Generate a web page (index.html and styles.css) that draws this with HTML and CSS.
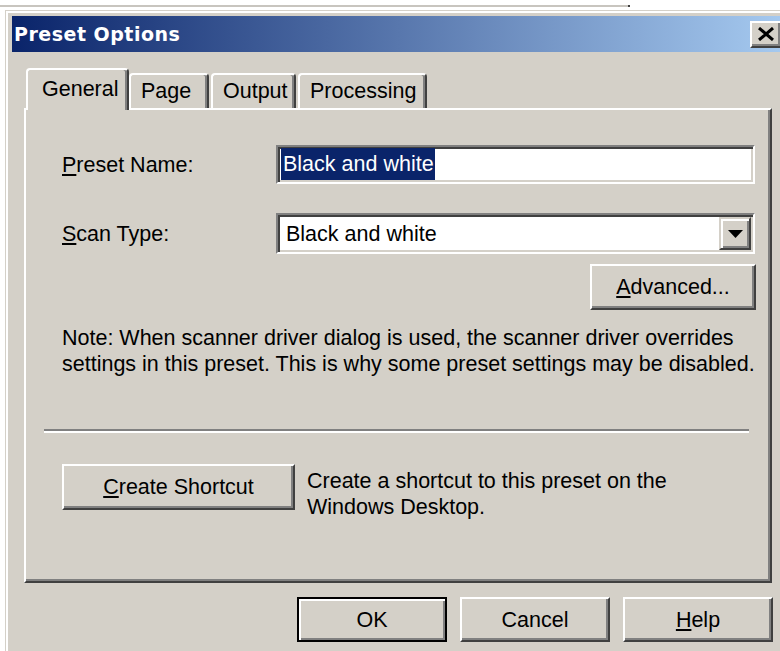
FILE: index.html
```html
<!DOCTYPE html>
<html lang="en">
<head>
<meta charset="utf-8">
<title>Preset Options</title>
<link rel="stylesheet" href="styles.css">
</head>
<body>
<div class="backdrop">
  <div class="backdrop-edge"></div>
</div>
<div class="dialog">
  <div class="titlebar">
    <span class="titlebar-text">Preset Options</span>
    <button class="titlebar-close" type="button" aria-label="Close">
      <svg width="18" height="14" viewBox="0 0 18 14"><path d="M2 1 L16 13 M16 1 L2 13" stroke="#000" stroke-width="3" fill="none"/></svg>
    </button>
  </div>
  <div class="dialog-body">
    <div class="tabs">
      <div class="tab tab-active tab-general">General</div>
      <div class="tab tab-page">Page</div>
      <div class="tab tab-output">Output</div>
      <div class="tab tab-processing">Processing</div>
    </div>
    <div class="tab-panel">
      <div class="field">
        <label class="field-label"><u>P</u>reset Name:</label>
        <div class="edit"><span class="edit-selection">Black and white</span></div>
      </div>
      <div class="field field-combo">
        <label class="field-label"><u>S</u>can Type:</label>
        <div class="combo">
          <span class="combo-value">Black and white</span>
          <span class="combo-button">
            <svg width="15" height="8" viewBox="0 0 15 8"><polygon points="0,0 15,0 7.5,8" fill="#000"/></svg>
          </span>
        </div>
      </div>
      <div class="advanced-row">
        <button class="btn btn-advanced" type="button"><u>A</u>dvanced...</button>
      </div>
      <p class="note">Note: When scanner driver dialog is used, the scanner driver overrides<br>settings in this preset. This is why some preset settings may be disabled.</p>
      <div class="separator"></div>
      <div class="shortcut-row">
        <button class="btn btn-shortcut" type="button"><u>C</u>reate Shortcut</button>
        <p class="shortcut-text">Create a shortcut to this preset on the<br>Windows Desktop.</p>
      </div>
    </div>
    <div class="actions">
      <button class="btn btn-action btn-default" type="button">OK</button>
      <button class="btn btn-action" type="button">Cancel</button>
      <button class="btn btn-action" type="button"><u>H</u>elp</button>
    </div>
  </div>
</div>
</body>
</html>
```

FILE: styles.css
```css
html, body {
  margin: 0;
  padding: 0;
}

body {
  width: 780px;
  height: 651px;
  overflow: hidden;
  background: #fff;
  color: #000;
  font-family: "Liberation Sans", Arial, sans-serif;
  font-size: 21.5px;
  line-height: 26px;
}

u {
  text-decoration-thickness: 2px;
  text-underline-offset: 2px;
}

/* window behind the dialog */
.backdrop {
  box-sizing: border-box;
  height: 10px;
  padding-top: 5px;
}

.backdrop-edge {
  width: 628px;
  height: 2px;
  background: #c8c5bf;
  border-right: 2px solid #404040;
}

/* dialog frame */
.dialog {
  box-sizing: border-box;
  width: 800px;
  height: 641px;
  margin-left: 5px;
  padding: 5px 0 0 6px;
  background: #d4d0c8;
  border-top: 1px solid #d4d0c8;
  border-left: 1px solid #d4d0c8;
  box-shadow: inset 2px 2px #fff;
}

.titlebar {
  box-sizing: border-box;
  display: flex;
  align-items: center;
  justify-content: space-between;
  width: 774px;
  height: 36px;
  padding: 0 4px 0 2px;
  background: linear-gradient(to right, #0a246a, #a6caf0);
}

.titlebar-text {
  font-family: "DejaVu Sans", sans-serif;
  font-weight: bold;
  font-size: 19px;
  line-height: 1;
  letter-spacing: 0.5px;
  color: #fff;
}

.titlebar-close {
  box-sizing: border-box;
  display: flex;
  align-items: center;
  justify-content: center;
  width: 32px;
  height: 27px;
  padding: 0;
  background: #d4d0c8;
  border: 2px solid;
  border-color: #fff #404040 #404040 #fff;
  box-shadow: inset -2px -2px #808080;
}

.dialog-body {
  padding: 16px 0 0 12px;
}

/* tab strip */
.tabs {
  display: flex;
  align-items: flex-end;
  height: 40px;
  padding-left: 2px;
}

.tab {
  box-sizing: border-box;
  height: 35px;
  padding: 3px 0 0 10px;
  background: #d4d0c8;
  border-top: 2px solid #fff;
  border-left: 2px solid #fff;
  border-right: 2px solid #404040;
  border-radius: 4px 4px 0 0;
  box-shadow: inset -2px 0 #808080;
  white-space: nowrap;
}

.tab-active {
  position: relative;
  z-index: 1;
  height: 42px;
  margin-bottom: -2px;
  padding: 6px 0 0 14px;
}

.tab-general { width: 103px; }
.tab-page { width: 80px; }
.tab-output { width: 85px; margin-left: 2px; }
.tab-processing { width: 129px; margin-left: 2px; }

.tab-panel {
  box-sizing: border-box;
  width: 748px;
  height: 475px;
  padding: 35px 15px 0 36px;
  border: 2px solid;
  border-color: #fff #404040 #404040 #fff;
  box-shadow: inset -2px -2px #808080;
}

/* label + control rows */
.field {
  display: grid;
  grid-template-columns: 214px 1fr;
  align-items: center;
}

.field-combo {
  margin-top: 29px;
}

.edit,
.combo {
  box-sizing: border-box;
  background: #fff;
  border: 2px solid;
  border-color: #808080 #fff #fff #808080;
  box-shadow: inset 2px 2px #404040, inset -2px -2px #d4d0c8;
}

.edit {
  height: 39px;
  padding: 1px 0 0 3px;
}

.edit-selection {
  display: inline-block;
  height: 32px;
  line-height: 32px;
  padding: 0 1px 0 2px;
  background: #0a246a;
  color: #fff;
}

.combo {
  display: flex;
  align-items: center;
  height: 41px;
  padding: 2px 2px 2px 8px;
}

.combo-value {
  flex: 1;
  white-space: nowrap;
}

.combo-button {
  box-sizing: border-box;
  display: flex;
  align-items: center;
  justify-content: center;
  align-self: stretch;
  width: 32px;
  background: #d4d0c8;
  border: 2px solid;
  border-color: #d4d0c8 #404040 #404040 #d4d0c8;
  box-shadow: inset 2px 2px #fff, inset -2px -2px #808080;
}

/* push buttons */
.btn {
  box-sizing: border-box;
  height: 46px;
  padding: 0;
  font: inherit;
  color: #000;
  background: #d4d0c8;
  border: 2px solid;
  border-color: #fff #404040 #404040 #fff;
  box-shadow: inset -2px -2px #808080;
  white-space: nowrap;
}

.advanced-row {
  display: flex;
  justify-content: flex-end;
  margin: 10px -1px 0 0;
}

.btn-advanced {
  width: 166px;
}

.note {
  margin: 15px 0 0;
  white-space: nowrap;
}

.separator {
  margin: 52px 6px 0 -18px;
  border-top: 2px solid #808080;
  border-bottom: 2px solid #fff;
}

.shortcut-row {
  display: flex;
  align-items: flex-start;
  gap: 12px;
  margin-top: 31px;
}

.btn-shortcut {
  flex-shrink: 0;
  width: 233px;
}

.shortcut-text {
  margin: 4px 0 0;
  white-space: nowrap;
}

/* dialog buttons */
.actions {
  display: flex;
  justify-content: flex-end;
  gap: 13px;
  width: 749px;
  margin-top: 14px;
}

.btn-action {
  width: 150px;
  height: 45px;
}

.btn-default {
  border-color: #000;
  box-shadow: inset 2px 2px #fff, inset -2px -2px #808080;
}
```
